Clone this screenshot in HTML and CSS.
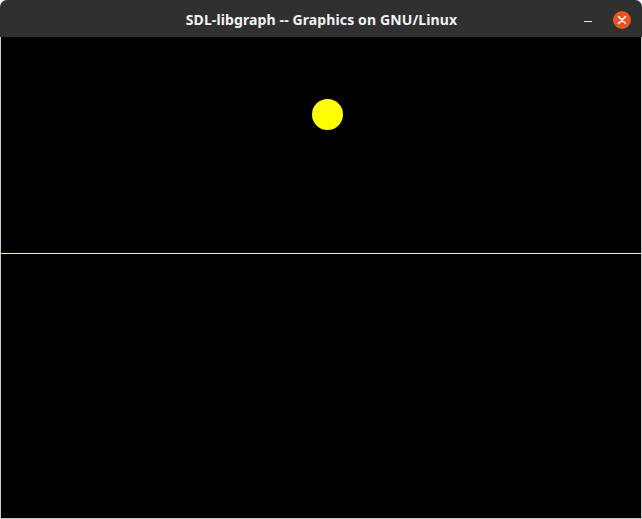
FILE: index.html
```html
<!DOCTYPE html>
<html>
<head>
<meta charset="utf-8">
<link rel="stylesheet" href="styles.css">
</head>
<body>
<div class="window">
  <div class="titlebar">
    <div class="title">SDL-libgraph -- Graphics on GNU/Linux</div>
    <div class="controls">
      <div class="min"></div>
      <div class="close">
        <svg width="18" height="18" viewBox="0 0 18 18"><path d="M5.5 5.5 L12.5 12.5 M12.5 5.5 L5.5 12.5" stroke="#fff" stroke-width="1.6" stroke-linecap="round"/></svg>
      </div>
    </div>
  </div>
  <div class="canvas">
    <svg class="drawing" width="640" height="481" viewBox="0 0 640 481">
      <rect x="0" y="0" width="640" height="481" fill="#000"/>
      <circle cx="326.5" cy="77.5" r="15.5" fill="#ffff00"/>
      <rect x="0" y="216" width="640" height="1" fill="#f4f48a"/>
    </svg>
  </div>
</div>
</body>
</html>
```
FILE: styles.css
```css
html, body {
  margin: 0;
  padding: 0;
  background: #f6f6f6;
}
.window {
  width: 642px;
  height: 519px;
  display: flex;
  flex-direction: column;
  border-radius: 7px 7px 0 0;
  overflow: hidden;
  background: #c9c9c9;
}
.titlebar {
  height: 37px;
  flex: none;
  background: #303030;
  position: relative;
  display: flex;
  align-items: center;
  justify-content: center;
}
.title {
  font-family: "Noto Sans", "DejaVu Sans", sans-serif;
  font-weight: bold;
  font-size: 14px;
  color: #f2f2f2;
  letter-spacing: 0.12px;
  margin-left: 1px;
  margin-top: 1px;
}
.controls {
  position: absolute;
  right: 11px;
  top: 11px;
  display: flex;
  align-items: center;
  gap: 21px;
}
.min {
  width: 8px;
  height: 1px;
  background: #e8e8e8;
  margin-top: 3px;
}
.close {
  width: 18px;
  height: 18px;
  border-radius: 50%;
  background: #e95420;
  display: flex;
}
.canvas {
  flex: 1;
  margin: 0 1px 1px 1px;
  background: #000;
  display: flex;
}
.drawing {
  display: block;
}
```
